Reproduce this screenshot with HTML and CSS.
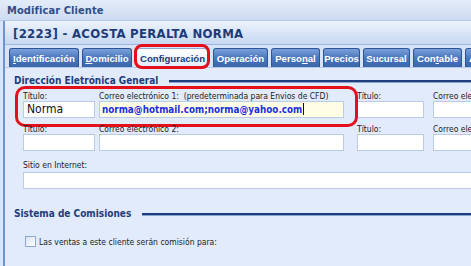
FILE: index.html
```html
<!DOCTYPE html>
<html lang="es">
<head>
<meta charset="utf-8">
<title>Modificar Cliente</title>
<link rel="stylesheet" href="styles.css">
</head>
<body>
<div class="titlebar">Modificar Cliente</div>
<div class="frame">
  <div class="header">[2223] - ACOSTA PERALTA NORMA</div>
  <div class="tabs">
    <div class="tab t-ident"><u>I</u>dentificación</div>
    <div class="tab t-dom"><u>D</u>omicilio</div>
    <div class="tab t-conf active"><span class="tab-clip">Configuración</span></div>
    <div class="tab t-oper">Operación</div>
    <div class="tab t-pers">Perso<u>n</u>al</div>
    <div class="tab t-prec">Precios</div>
    <div class="tab t-suc">Sucursal</div>
    <div class="tab t-cont">Con<u>t</u>able</div>
    <div class="tab t-a">A</div>
  </div>
  <div class="panel">
    <div class="section">
      <span class="section-title">Dirección Eletrónica General</span>
      <span class="rule"></span>
    </div>
    <div class="fields">
      <div class="row marked-row">
        <div class="field f-title"><label>Título:</label><div class="input">Norma</div></div>
        <div class="field f-mail"><label>Correo electrónico 1:&nbsp;&nbsp;(predeterminada para Envios de CFD)</label><div class="input email">norma@hotmail.com;norma@yahoo.com<span class="caret"></span></div></div>
        <div class="field f-title2"><label>Título:</label><div class="input"></div></div>
        <div class="field f-mail2"><label>Correo electrónico 3:</label><div class="input"></div></div>
      </div>
      <div class="row">
        <div class="field f-title"><label>Título:</label><div class="input"></div></div>
        <div class="field f-mail"><label>Correo electrónico 2:</label><div class="input"></div></div>
        <div class="field f-title2"><label>Título:</label><div class="input"></div></div>
        <div class="field f-mail2"><label>Correo electrónico 4:</label><div class="input"></div></div>
      </div>
      <div class="row single">
        <div class="field f-web"><label>Sitio en Internet:</label><div class="input"></div></div>
      </div>
    </div>
    <div class="section section2">
      <span class="section-title">Sistema de Comisiones</span>
      <span class="rule"></span>
    </div>
    <div class="check-row">
      <span class="checkbox"></span>
      <span class="check-label">Las ventas a este cliente serán comisión para:</span>
    </div>
  </div>
</div>
</body>
</html>
```

FILE: styles.css
```css
* { box-sizing: border-box; }
html, body {
  margin: 0;
  padding: 0;
  width: 471px;
  height: 266px;
  overflow: hidden;
  background: #d9e5f6;
  font-family: "DejaVu Sans Condensed", "DejaVu Sans", sans-serif;
}
.titlebar {
  height: 21px;
  padding: 4px 0 0 7px;
  font-size: 11px;
  font-weight: bold;
  color: #2d4f8a;
  background: linear-gradient(#e3ecf9, #cddcf2);
  border-bottom: 1px solid #b3c7e6;
  letter-spacing: 0.1px;
}
.frame {
  margin-left: 3px;
  border-left: 2px solid #6e93cf;
  background: #d6e3f6;
  height: 245px;
  overflow: hidden;
}
.header {
  height: 24px;
  padding: 5px 0 0 8px;
  font-size: 13px;
  font-weight: bold;
  color: #1c3b78;
  background: linear-gradient(#edf3fc, #c7d8f1);
  border-bottom: 1px solid #9db6de;
  letter-spacing: 0.3px;
  white-space: nowrap;
}
.tabs {
  display: flex;
  gap: 3px;
  padding: 3px 0 0 4px;
  height: 22px;
  white-space: nowrap;
}
.tab {
  position: relative;
  height: 19px;
  padding: 4px 0 0 0;
  font-family: "Liberation Sans", Arial, sans-serif;
  font-size: 9.6px;
  font-weight: bold;
  text-align: center;
  color: #ffffff;
  background: linear-gradient(#7aa0da, #4a77bc 50%, #3b66ac);
  border: 1px solid #2e5597;
  border-bottom: none;
  border-radius: 3px 3px 0 0;
  flex: none;
  overflow: hidden;
}
.tab u { text-decoration: underline; }
.t-ident { width: 70px; }
.t-dom { width: 50px; }
.t-conf { width: 72px; margin: 0 2px 0 1px; }
.t-oper { width: 55px; }
.t-pers { width: 49px; }
.t-prec { width: 37px; }
.t-suc { width: 47px; }
.t-cont { width: 49px; }
.t-a { width: 20px; text-align: left; padding-left: 3px; }
.tab.active {
  overflow: visible;
  color: #1c3b78;
  background: linear-gradient(#ffffff, #e3ecfb);
  border-color: #8ea9d6;
  padding: 0;
}
.tab-clip {
  display: block;
  height: 100%;
  padding: 4px 0 0 3px;
  text-align: left;
  overflow: hidden;
}
.tab.active::after {
  content: "";
  position: absolute;
  left: -3px;
  right: -3px;
  top: -5px;
  bottom: -2px;
  border: 3px solid #e3101c;
  border-radius: 8px;
}
.panel {
  background: #e1ebfb;
  border-top: 1px solid #b7cbe9;
  height: 200px;
  padding: 4px 0 0 9px;
  overflow: hidden;
}
.section {
  display: flex;
  align-items: center;
  gap: 11px;
  height: 16px;
  white-space: nowrap;
}
.section-title {
  font-size: 10px;
  font-weight: bold;
  color: #1f3d7c;
}
.rule {
  flex: 1;
  height: 3px;
  background: #1f3d7c;
  border-bottom: 1px solid #8aa3cf;
  margin-top: 2px;
}
.fields {
  padding: 3px 0 0 9px;
}
.row {
  position: relative;
  display: grid;
  grid-template-columns: 72px 249px 80px 209px;
  height: 33px;
}
.row > .f-mail { margin-left: 4px; }
.row > .f-title2 { margin-left: 13px; }
.row > .f-mail2 { margin-left: 9px; }
.row.single {
  display: block;
  height: 32px;
  padding-top: 3px;
}
.marked-row::after {
  content: "";
  position: absolute;
  left: -8px;
  top: -5px;
  width: 337px;
  height: 35px;
  border: 3px solid #e3101c;
  border-radius: 10px;
}
.field label {
  display: block;
  font-size: 8.5px;
  color: #222;
  height: 10px;
  line-height: 10px;
  white-space: nowrap;
}
.field .input {
  height: 17px;
  background: #ffffff;
  border: 1px solid #b9cbe6;
  font-size: 12px;
  line-height: 15px;
  padding-left: 3px;
  color: #111;
  white-space: nowrap;
  overflow: hidden;
}
.field .input.email {
  background: #fffee4;
  color: #1a2ee0;
  font-weight: bold;
  font-size: 9.8px;
  padding-left: 2px;
}
.caret {
  display: inline-block;
  width: 1px;
  height: 12px;
  background: #111;
  vertical-align: -2px;
  margin-left: 1px;
}
.f-web label { margin-bottom: 2px; }
.f-web .input { width: 460px; }
.section2 { margin-top: 16px; }
.check-row {
  display: flex;
  align-items: center;
  gap: 3px;
  padding: 15px 0 0 11px;
}
.checkbox {
  width: 11px;
  height: 11px;
  flex: none;
  border: 1px solid #8fa7cc;
  background: linear-gradient(135deg, #d8e2f1, #ffffff);
}
.check-label {
  font-size: 8.5px;
  color: #1b1b1b;
  white-space: nowrap;
}
```
